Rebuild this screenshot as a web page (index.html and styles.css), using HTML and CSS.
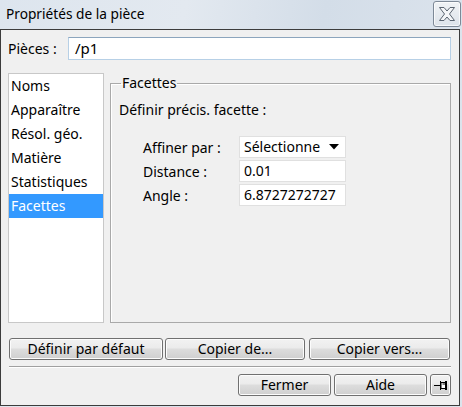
FILE: index.html
```html
<!DOCTYPE html>
<html lang="fr">
<head>
<meta charset="utf-8">
<title>Propriétés de la pièce</title>
<link rel="stylesheet" href="styles.css">
</head>
<body>
<div class="window">
  <div class="titlebar">
    <span class="title">Propriétés de la pièce</span>
    <button class="close" aria-label="Fermer">
      <svg width="20" height="18" viewBox="0 0 20 18">
        <path d="M2.5 2.5 L7 2.5 L10 6 L13 2.5 L17.5 2.5 L12.5 9 L17.5 15.5 L13 15.5 L10 12 L7 15.5 L2.5 15.5 L7.5 9 Z" fill="#f4f6f8" stroke="#5b6571" stroke-width="1" stroke-linejoin="round"/>
      </svg>
    </button>
  </div>
  <div class="client">
    <div class="row-pieces">
      <label class="lbl-pieces">Pièces :</label>
      <div class="input-main">/p1</div>
    </div>
    <div class="main">
      <ul class="list">
        <li>Noms</li>
        <li>Apparaître</li>
        <li>Résol. géo.</li>
        <li>Matière</li>
        <li>Statistiques</li>
        <li class="sel">Facettes</li>
      </ul>
      <fieldset class="group">
        <legend>Facettes</legend>
        <div class="intro">Définir précis. facette :</div>
        <div class="form">
          <div class="frow">
            <span class="flabel">Affiner par :</span>
            <div class="select"><span>Sélectionne</span><svg width="10" height="6" viewBox="0 0 10 6"><path d="M0 0 H10 L5 5.5 Z" fill="#000"/></svg></div>
          </div>
          <div class="frow">
            <span class="flabel">Distance :</span>
            <div class="field">0.01</div>
          </div>
          <div class="frow">
            <span class="flabel">Angle :</span>
            <div class="field">6.8727272727</div>
          </div>
        </div>
      </fieldset>
    </div>
    <div class="btn-row">
      <button class="btn b1">Définir par défaut</button>
      <button class="btn b2">Copier de...</button>
      <button class="btn b3">Copier vers...</button>
    </div>
    <div class="sep"></div>
    <div class="btn-row2">
      <button class="btn b4">Fermer</button>
      <button class="btn b5">Aide</button>
      <button class="btn pin" aria-label="Épingler">
        <svg width="16" height="12" viewBox="0 0 16 12">
          <path d="M1 6.5 H7" stroke="#000" stroke-width="1"/>
          <path d="M7.5 2 V11" stroke="#000" stroke-width="1"/>
          <path d="M8 3.5 H13.5 V9.5 H8 Z" fill="#fff" stroke="#000" stroke-width="1"/>
          <path d="M13 2 V11" stroke="#000" stroke-width="2"/>
          <path d="M9.5 4.5 H12 V5.5 H9.5 Z" fill="#000"/>
        </svg>
      </button>
    </div>
  </div>
</div>
</body>
</html>
```
FILE: styles.css
```css
* { box-sizing: border-box; }
html, body { margin: 0; padding: 0; }
body {
  width: 462px;
  height: 407px;
  overflow: hidden;
  font-family: "Noto Sans", "Open Sans", sans-serif;
  font-size: 14px;
  color: #000;
  background: #e8edf2;
}
.window {
  width: 462px;
  height: 407px;
  background: linear-gradient(90deg, #dfe6ee 0%, #d6dfe9 50%, #dce4ec 100%);
  display: flex;
  flex-direction: column;
}
.titlebar {
  height: 29px;
  display: flex;
  align-items: flex-start;
  justify-content: space-between;
  background: linear-gradient(100deg, #dde5ee 0%, #e3e9f0 40%, #d3dde8 70%, #dbe3ec 100%);
}
.title {
  font-size: 13.7px;
  margin: 4px 0 0 6px;
  color: #000;
}
.close {
  width: 28px;
  height: 26px;
  margin: 1px 1px 0 0;
  padding: 0;
  border: 1px solid #7d8997;
  border-radius: 3px;
  background: linear-gradient(#f0f3f6, #dde3ea);
  display: flex;
  align-items: center;
  justify-content: center;
  box-shadow: inset 0 0 0 1px rgba(255,255,255,0.7);
}
.client {
  width: 460px;
  height: 377px;
  background: #f0f0f0;
  border: 1px solid #3c3c3c;
  padding: 0 8px 0 7px;
  display: flex;
  flex-direction: column;
}
.row-pieces {
  display: flex;
  align-items: center;
  margin-top: 7px;
  height: 23px;
}
.lbl-pieces { width: 60px; padding-left: 0; }
.input-main {
  flex: 1;
  height: 23px;
  background: #fff;
  border: 1px solid #b7d0e6;
  border-top-color: #8ca5bd;
  padding: 1px 0 0 6px;
  font-size: 15px;
  line-height: 19px;
}
.main {
  display: flex;
  margin-top: 13px;
  height: 250px;
}
.list {
  list-style: none;
  margin: 0;
  padding: 0;
  width: 96px;
  height: 250px;
  background: #fff;
  border: 1px solid #c8c8c8;
  padding-top: 0;
}
.list li {
  height: 24px;
  line-height: 24px;
  padding-left: 2px;
  white-space: nowrap;
}
.list li.sel {
  background: #3399ff;
  color: #fff;
}
.group {
  flex: 1;
  margin: 0 0 0 6px;
  padding: 5px 8px 0 8px;
  border: 1px solid #a9a9a9;
  box-shadow: inset 1px 1px 0 #fff;
  height: 250px;
  min-width: 0;
}
.group legend {
  padding: 0 1px;
  margin-left: 2px;
  line-height: 20px;
}
.intro { margin-top: 2px; line-height: 20px; }
.form {
  margin-top: 16px;
  padding-left: 24px;
  display: flex;
  flex-direction: column;
  gap: 2px;
}
.frow {
  display: flex;
  align-items: center;
  height: 22px;
}
.flabel { width: 96px; }
.select, .field {
  width: 107px;
  height: 22px;
  background: #fff;
  border: 1px solid #e0e0e0;
  padding: 0 0 0 4px;
  line-height: 20px;
}
.select {
  display: flex;
  align-items: center;
  justify-content: space-between;
  padding-right: 6px;
}
.btn-row {
  display: flex;
  margin-top: 15px;
  padding-left: 1px;
  height: 22px;
}
.btn {
  font-family: inherit;
  font-size: 14px;
  color: #000;
  height: 22px;
  padding: 0;
  border: 1px solid #707070;
  border-radius: 3px;
  background: linear-gradient(#f2f2f2 0%, #ebebeb 45%, #dddddd 50%, #cfcfcf 100%);
  box-shadow: inset 0 0 0 1px #fcfcfc;
  line-height: 18px;
}
.b1 { width: 154px; }
.b2 { width: 140px; margin-left: 2px; }
.b3 { width: 141px; margin-left: 4px; }
.sep {
  margin: 6px 0 0 1px;
  height: 2px;
  border-top: 1px solid #a0a0a0;
  border-bottom: 1px solid #fff;
}
.btn-row2 {
  display: flex;
  justify-content: flex-end;
  margin-top: 6px;
  height: 22px;
}
.b4 { width: 93px; }
.b5 { width: 93px; margin-left: 3px; }
.pin {
  width: 21px;
  margin-left: 3px;
  display: flex;
  align-items: center;
  justify-content: center;
}
```
